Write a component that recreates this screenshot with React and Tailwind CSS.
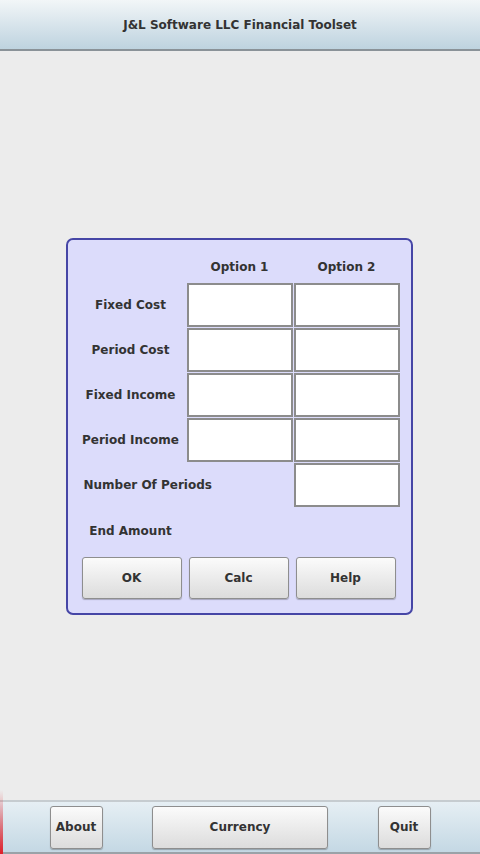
import React from "react";

const font = { fontFamily: '"DejaVu Sans", "Liberation Sans", sans-serif' };

function Btn({ children, className = "" }) {
  return (
    <button
      className={
        "rounded-[3px] border border-[#8e8e8e] bg-gradient-to-b from-[#fbfbfb] to-[#dcdcdc] text-[12px] font-bold text-[#333] shadow-[0_1px_1px_rgba(0,0,0,0.25)] " +
        className
      }
    >
      {children}
    </button>
  );
}

function Box() {
  return <div className="h-[44px] w-[106px] border-2 border-[#8c8c8c] bg-white" />;
}

const rows = ["Fixed Cost", "Period Cost", "Fixed Income", "Period Income"];

export default function App() {
  return (
    <div className="relative flex h-[854px] w-[480px] flex-col bg-[#ececec] text-[#333]" style={font}>
      <div className="flex h-[51px] shrink-0 items-center justify-center border-b-2 border-[#8a9298] bg-gradient-to-b from-[#f2f6f8] to-[#bed3df] text-[12px] font-bold">
        J&amp;L Software LLC Financial Toolset
      </div>

      <div className="flex flex-1 items-center justify-center">
        <div className="mr-[2px] mt-[2px] w-[347px] rounded-[7px] border-2 border-[#4646a6] bg-[#dcdcfb] pb-[14px] pl-[10px] pt-[17px] text-[12px] font-bold">
          <div className="mb-[6px] flex h-5 items-center">
            <div className="w-[109px]" />
            <div className="w-[106px] text-center">Option 1</div>
            <div className="ml-px w-[106px] text-center">Option 2</div>
          </div>
          {rows.map((r) => (
            <div key={r} className="flex h-[45px] items-start">
              <div className="flex h-[44px] w-[109px] items-center justify-center pr-[3px]">{r}</div>
              <Box />
              <div className="ml-px">
                <Box />
              </div>
            </div>
          ))}
          <div className="flex h-[45px] items-start">
            <div className="flex h-[44px] w-[216px] items-center pl-[6px]">Number Of Periods</div>
            <Box />
          </div>
          <div className="flex h-[45px] items-center">
            <div className="w-[106px] text-center">End Amount</div>
          </div>
          <div className="mt-[4px] flex gap-[7px] pl-[4px]">
            <Btn className="h-[42px] w-[100px]">OK</Btn>
            <Btn className="h-[42px] w-[100px]">Calc</Btn>
            <Btn className="h-[42px] w-[100px]">Help</Btn>
          </div>
        </div>
      </div>

      <div className="flex h-[54px] shrink-0 items-center justify-evenly border-t-2 border-b-2 border-t-[#c6ccd0] border-b-[#9aa2a8] bg-gradient-to-b from-[#e6eff4] to-[#c4d8e4]">
        <Btn className="h-[43px] w-[53px]">About</Btn>
        <Btn className="h-[43px] w-[176px]">Currency</Btn>
        <Btn className="h-[43px] w-[53px]">Quit</Btn>
      </div>

      <div className="absolute bottom-0 left-0 h-[64px] w-[3px] bg-gradient-to-b from-transparent to-[#e0202a]" />
    </div>
  );
}
